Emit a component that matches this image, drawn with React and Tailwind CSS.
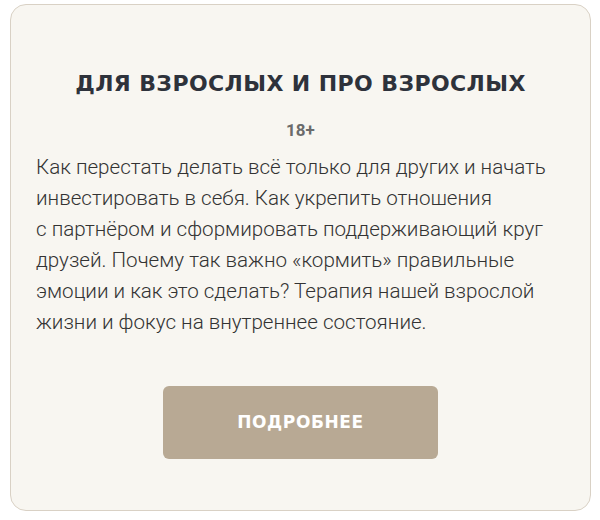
export default function App() {
  return (
    <div className="w-[600px] h-[520px] bg-white pt-[4px] pl-[10px]">
      <div className="w-[581px] h-[507px] rounded-[16px] border border-[#d9d1c5] bg-[#f8f6f1] flex flex-col items-center pt-[65px]">
        <h1 className="font-['DejaVu_Sans',sans-serif] text-[22px] leading-[28px] font-bold text-[#2e323b] tracking-[0.4px]">
          ДЛЯ ВЗРОСЛЫХ И ПРО ВЗРОСЛЫХ
        </h1>
        <div className="mt-[22px] font-['Roboto',sans-serif] text-[17px] leading-[20px] font-bold text-[#6b6b6b]">
          18+
        </div>
        <p className="mt-[12px] self-stretch pl-[25px] pr-[5px] font-['Roboto',sans-serif] font-light text-[20.6px] leading-[31px] text-[#333333]">
          Как перестать делать всё только для других и начать
          <br />
          инвестировать в себя. Как укрепить отношения
          <br />
          с партнёром и сформировать поддерживающий круг
          <br />
          друзей. Почему так важно «кормить» правильные
          <br />
          эмоции и как это сделать? Терапия нашей взрослой
          <br />
          жизни и фокус на внутреннее состояние.
        </p>
        <button className="mt-[48px] w-[275px] h-[73px] rounded-[6px] bg-[#b8a994] text-white font-['DejaVu_Sans',sans-serif] text-[17px] font-bold tracking-[0.6px]">
          ПОДРОБНЕЕ
        </button>
      </div>
    </div>
  );
}
